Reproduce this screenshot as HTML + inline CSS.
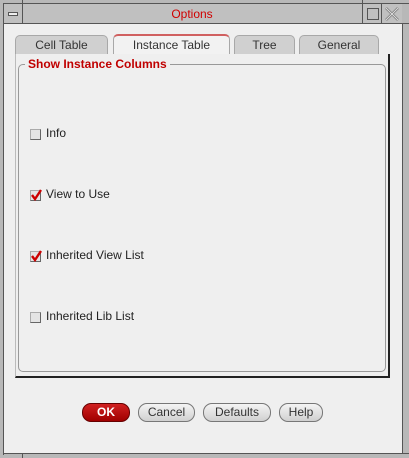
<!DOCTYPE html>
<html><head><style>
*{margin:0;padding:0;box-sizing:border-box}
body{width:409px;height:458px;background:#b8b8b8;position:relative;overflow:hidden;font-family:"Liberation Sans",sans-serif;font-size:12px;color:#222}
.a{position:absolute}
.tab{position:absolute;top:35px;height:20px;background:#d0d0d0;border:1px solid #a8a8a8;border-bottom:none;border-radius:5px 5px 0 0;text-align:center;line-height:19px;font-size:12px;color:#333}
.cb{position:absolute;left:30px;width:11px;height:11px;background:#e4e4e4;border:1px solid #aaa;border-right-color:#666;border-bottom-color:#666}
.lb{position:absolute;left:46px;font-size:12px;color:#222}
.btn{position:absolute;top:403px;height:19px;border-radius:9px;background:linear-gradient(#f4f4f4,#d0d0d0);border:1px solid #777;text-align:center;line-height:17px;font-size:12px;color:#333}
</style></head><body>
<div class="a" style="left:3px;top:3px;width:406px;height:1px;background:#555"></div>
<div class="a" style="left:3px;top:3px;width:1px;height:452px;background:#555"></div>
<div class="a" style="left:4px;top:4px;width:398px;height:19px;background:#c0c0c0"></div>
<div class="a" style="left:22px;top:0;width:1px;height:24px;background:#555"></div>
<div class="a" style="left:362px;top:0;width:1px;height:24px;background:#555"></div>
<div class="a" style="left:381px;top:4px;width:1px;height:20px;background:#555"></div>
<div class="a" style="left:3px;top:23px;width:406px;height:1px;background:#555"></div>
<div class="a" style="left:8px;top:12px;width:10px;height:4px;border:1px solid #555;background:#eee"></div>
<div class="a" style="left:22px;top:5px;width:340px;text-align:center;color:#d00000;font-size:12px;line-height:18px">Options</div>
<div class="a" style="left:367px;top:8px;width:12px;height:12px;border:1px solid #555"></div>
<svg class="a" style="left:385px;top:7px" width="14" height="14"><path d="M1 1L13 13M13 1L1 13" stroke="#777" stroke-width="2.5"/><path d="M1 1L13 13M13 1L1 13" stroke="#ddd" stroke-width="1"/></svg>
<div class="a" style="left:4px;top:24px;width:398px;height:429px;background:#efefef"></div>
<div class="a" style="left:402px;top:24px;width:1px;height:430px;background:#555"></div>
<div class="a" style="left:3px;top:453px;width:406px;height:1px;background:#555"></div>
<div class="a" style="left:22px;top:453px;width:1px;height:5px;background:#555"></div>
<div class="tab" style="left:15px;width:93px">Cell Table</div>
<div class="tab" style="left:113px;width:117px;top:34px;height:21px;background:#f2f2f2;border-top:2px solid #d06060">Instance Table</div>
<div class="tab" style="left:234px;width:61px">Tree</div>
<div class="tab" style="left:299px;width:80px">General</div>
<div class="a" style="left:15px;top:54px;width:375px;height:324px;background:#efefef;border-left:1px solid #bbb;border-right:2px solid #222;border-bottom:2px solid #222"></div>
<div class="a" style="left:18px;top:64px;width:368px;height:308px;border:1px solid #999;border-radius:5px"></div>
<div class="a" style="left:25px;top:57px;padding:0 3px;background:#efefef;color:#c00000;font-weight:bold;font-size:12px;line-height:15px">Show Instance Columns</div>
<div class="cb" style="top:129px"></div><div class="lb" style="top:126px">Info</div>
<div class="cb" style="top:190px"></div><svg class="a" style="left:30px;top:188px" width="12" height="13"><path d="M2 7L5 11L11 2" stroke="#c00" stroke-width="2.4" fill="none"/></svg><div class="lb" style="top:187px">View to Use</div>
<div class="cb" style="top:251px"></div><svg class="a" style="left:30px;top:249px" width="12" height="13"><path d="M2 7L5 11L11 2" stroke="#c00" stroke-width="2.4" fill="none"/></svg><div class="lb" style="top:248px">Inherited View List</div>
<div class="cb" style="top:312px"></div><div class="lb" style="top:309px">Inherited Lib List</div>
<div class="btn" style="left:82px;width:48px;background:linear-gradient(#d02020,#a00000);color:#fff;font-weight:bold;border-color:#600">OK</div>
<div class="btn" style="left:138px;width:57px">Cancel</div>
<div class="btn" style="left:203px;width:68px">Defaults</div>
<div class="btn" style="left:279px;width:44px">Help</div>
</body></html>
